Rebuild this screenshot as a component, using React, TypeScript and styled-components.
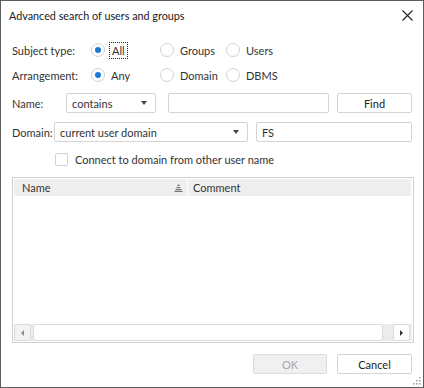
import React from "react";
import styled, { createGlobalStyle } from "styled-components";

const GlobalStyle = createGlobalStyle`
  html, body {
    margin: 0;
    padding: 0;
    background: #ffffff;
  }
  body {
    font-family: Lato, "Open Sans", sans-serif;
    font-size: 11px;
    color: #333333;
  }
`;

const Window = styled.div`
  width: 424px;
  height: 388px;
  box-sizing: border-box;
  border: 1px solid #5d5d5d;
  background: #ffffff;
  display: flex;
  flex-direction: column;
  position: relative;
`;

const TitleBar = styled.div`
  height: 29px;
  display: flex;
  align-items: center;
  justify-content: space-between;
  padding: 0 9px 0 8px;
`;

const Title = styled.div`
  font-size: 10.8px;
  color: #1a1a1a;
`;

const CloseButton = styled.div`
  width: 14px;
  height: 14px;
  display: flex;
  align-items: center;
  justify-content: center;
`;

const Body = styled.div`
  display: flex;
  flex-direction: column;
  padding: 0 10px 0 11px;
`;

const Row = styled.div<{ $top: number }>`
  display: flex;
  align-items: center;
  height: 20px;
  margin-top: ${(p) => p.$top}px;
`;

const Label = styled.div<{ $w: number }>`
  width: ${(p) => p.$w}px;
  flex-shrink: 0;
  color: #333333;
  white-space: nowrap;
`;

const RadioOption = styled.label<{ $w: number }>`
  width: ${(p) => p.$w}px;
  display: flex;
  align-items: center;
  gap: 6px;
`;

const RadioCircle = styled.span<{ $checked?: boolean }>`
  width: 14px;
  height: 14px;
  box-sizing: border-box;
  border-radius: 50%;
  border: 1px solid #d2d2d2;
  background: #ffffff;
  display: flex;
  align-items: center;
  justify-content: center;
  &::after {
    content: "";
    width: 6px;
    height: 6px;
    border-radius: 50%;
    background: ${(p) => (p.$checked ? "#1c7ad4" : "transparent")};
  }
`;

const Focused = styled.span`
  outline: 1px dotted #222222;
  outline-offset: 1px;
  padding: 0 1px;
`;

const Field = styled.div<{ $w: number }>`
  width: ${(p) => p.$w}px;
  height: 20px;
  box-sizing: border-box;
  border: 1px solid #d4d4d4;
  border-radius: 2px;
  background: #ffffff;
  display: flex;
  align-items: center;
  padding: 0 5px;
  flex-shrink: 0;
`;

const ComboText = styled.span`
  flex: 1;
`;

const Arrow = styled.span`
  width: 0;
  height: 0;
  border-left: 3.5px solid transparent;
  border-right: 3.5px solid transparent;
  border-top: 4px solid #444444;
  margin-right: 3px;
`;

const Button = styled.div<{ $w: number; $disabled?: boolean }>`
  width: ${(p) => p.$w}px;
  height: 20px;
  box-sizing: border-box;
  border: 1px solid ${(p) => (p.$disabled ? "#dcdcdc" : "#d4d4d4")};
  border-radius: 2px;
  background: ${(p) => (p.$disabled ? "#f0f0f0" : "#ffffff")};
  color: ${(p) => (p.$disabled ? "#a8a8a8" : "#222222")};
  display: flex;
  align-items: center;
  justify-content: center;
  flex-shrink: 0;
`;

const CheckRow = styled.div`
  display: flex;
  align-items: center;
  gap: 7px;
  height: 18px;
  margin-top: 8px;
  padding-left: 43px;
`;

const CheckBox = styled.span`
  width: 13px;
  height: 13px;
  box-sizing: border-box;
  border: 1px solid #d2d2d2;
  border-radius: 2px;
  background: #ffffff;
`;

const Grid = styled.div`
  margin-top: 9px;
  width: 402px;
  height: 166px;
  box-sizing: border-box;
  border: 1px solid #d0d0d0;
  padding: 1px;
  display: flex;
  flex-direction: column;
`;

const GridHeader = styled.div`
  display: flex;
  height: 17px;
  margin-right: 1px;
  gap: 1px;
`;

const HeaderCell = styled.div<{ $w?: number; $pad: number }>`
  ${(p) => (p.$w ? `width: ${p.$w}px;` : "flex: 1;")}
  background: #efefef;
  display: flex;
  align-items: center;
  padding-left: ${(p) => p.$pad}px;
  padding-right: 4px;
  box-sizing: border-box;
  color: #333333;
`;

const HeaderText = styled.span`
  flex: 1;
`;

const GridBody = styled.div`
  flex: 1;
`;

const HScroll = styled.div`
  height: 17px;
  display: flex;
  align-items: stretch;
  background: #ececec;
`;

const ScrollButton = styled.div<{ $light?: boolean }>`
  width: 17px;
  box-sizing: border-box;
  border: 1px solid #dadada;
  border-radius: 2px;
  background: ${(p) => (p.$light ? "#ffffff" : "#f2f2f2")};
  display: flex;
  align-items: center;
  justify-content: center;
`;

const ScrollThumb = styled.div`
  width: 350px;
  margin: 0 10px 0 2px;
  box-sizing: border-box;
  border: 1px solid #dadada;
  border-radius: 3px;
  background: #ffffff;
`;

const Tri = styled.span<{ $dir: "left" | "right"; $color: string }>`
  width: 0;
  height: 0;
  border-top: 3px solid transparent;
  border-bottom: 3px solid transparent;
  ${(p) =>
    p.$dir === "left"
      ? `border-right: 3px solid ${p.$color};`
      : `border-left: 3px solid ${p.$color};`}
`;

const Footer = styled.div`
  display: flex;
  justify-content: flex-end;
  gap: 10px;
  margin-top: 11px;
  padding-right: 1px;
`;

const Grip = styled.svg`
  position: absolute;
  right: 1px;
  bottom: 1px;
`;

function Radio({ w, checked, children }: { w: number; checked?: boolean; children: React.ReactNode }) {
  return (
    <RadioOption $w={w}>
      <RadioCircle $checked={checked} />
      {children}
    </RadioOption>
  );
}

export default function App() {
  return (
    <>
      <GlobalStyle />
      <Window>
        <TitleBar>
          <Title>Advanced search of users and groups</Title>
          <CloseButton>
            <svg width="11" height="11" viewBox="0 0 11 11">
              <path d="M0.5 0.5 L10.5 10.5 M10.5 0.5 L0.5 10.5" stroke="#222" strokeWidth="1.1" />
            </svg>
          </CloseButton>
        </TitleBar>
        <Body>
          <Row $top={10}>
            <Label $w={79}>Subject type:</Label>
            <Radio w={69} checked>
              <Focused>All</Focused>
            </Radio>
            <Radio w={66}>Groups</Radio>
            <Radio w={60}>Users</Radio>
          </Row>
          <Row $top={5}>
            <Label $w={79}>Arrangement:</Label>
            <Radio w={69} checked>
              Any
            </Radio>
            <Radio w={66}>Domain</Radio>
            <Radio w={60}>DBMS</Radio>
          </Row>
          <Row $top={8}>
            <Label $w={54}>Name:</Label>
            <Field $w={90}>
              <ComboText>contains</ComboText>
              <Arrow />
            </Field>
            <Field $w={161} style={{ marginLeft: 12 }} />
            <Button $w={75} style={{ marginLeft: 8 }}>
              Find
            </Button>
          </Row>
          <Row $top={9}>
            <Label $w={42}>Domain:</Label>
            <Field $w={194}>
              <ComboText>current user domain</ComboText>
              <Arrow />
            </Field>
            <Field $w={156} style={{ marginLeft: 8 }}>
              FS
            </Field>
          </Row>
          <CheckRow>
            <CheckBox />
            Connect to domain from other user name
          </CheckRow>
          <Grid>
            <GridHeader>
              <HeaderCell $w={173} $pad={8}>
                <HeaderText>Name</HeaderText>
                <svg width="9" height="8" viewBox="0 0 9 8">
                  <path d="M4.5 0 L6 2 L3 2 Z" fill="#777" />
                  <rect x="2.5" y="3" width="4" height="1.2" fill="#777" />
                  <rect x="1.5" y="5" width="6" height="1.2" fill="#777" />
                  <rect x="0.5" y="6.8" width="8" height="1.2" fill="#777" />
                </svg>
              </HeaderCell>
              <HeaderCell $pad={5}>
                <HeaderText>Comment</HeaderText>
              </HeaderCell>
            </GridHeader>
            <GridBody />
            <HScroll>
              <ScrollButton>
                <Tri $dir="left" $color="#8a8a8a" />
              </ScrollButton>
              <ScrollThumb />
              <ScrollButton $light>
                <Tri $dir="right" $color="#333" />
              </ScrollButton>
            </HScroll>
          </Grid>
          <Footer>
            <Button $w={74} $disabled>
              OK
            </Button>
            <Button $w={75}>Cancel</Button>
          </Footer>
        </Body>
        <Grip width="10" height="10" viewBox="0 0 10 10">
          {[
            [8, 2],
            [8, 5],
            [5, 5],
            [8, 8],
            [5, 8],
            [2, 8],
          ].map(([x, y]) => (
            <rect key={`${x}-${y}`} x={x - 1} y={y - 1} width="1.5" height="1.5" fill="#a0a0a0" />
          ))}
        </Grip>
      </Window>
    </>
  );
}
